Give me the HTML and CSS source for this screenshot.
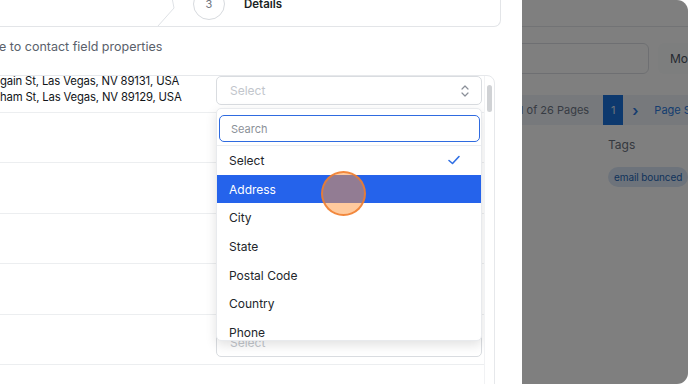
FILE: index.html
```html
<!DOCTYPE html>
<html lang="en">
<head>
    <meta charset="UTF-8">
    <meta name="viewport" content="width=device-width, initial-scale=1.0">
    <title>Import Contacts - Map Fields</title>
    <link rel="stylesheet" href="styles.css">
</head>
<body>
    <div class="screen">
        <!-- Drawer with the mapping step -->
        <div class="panel">
            <div class="stepper">
                <div class="step-prev"></div>
                <svg class="step-arrow" width="20" height="45" viewBox="0 0 20 45">
                    <polyline points="12,0 17,26 1,44" fill="none" stroke="#dfe2e6" stroke-width="1"/>
                </svg>
                <div class="step-num">3</div>
                <div class="step-label">Details</div>
            </div>

            <p class="intro">e to contact field properties</p>

            <div class="table-wrap">
                <div class="table-body">
                    <div class="row row-first">
                        <div class="cell-value">
                            <div>gain St, Las Vegas, NV 89131, USA</div>
                            <div>ham St, Las Vegas, NV 89129, USA</div>
                        </div>
                        <div class="cell-select">
                            <div class="select">
                                <span class="placeholder">Select</span>
                                <svg class="select-icon" width="10" height="14" viewBox="0 0 10 14">
                                    <polyline points="2,5 5,2 8,5" fill="none" stroke="#8a8f98" stroke-width="1.2" stroke-linecap="round" stroke-linejoin="round"/>
                                    <polyline points="2,9 5,12 8,9" fill="none" stroke="#8a8f98" stroke-width="1.2" stroke-linecap="round" stroke-linejoin="round"/>
                                </svg>
                            </div>

                            <div class="dropdown">
                                <div class="dropdown-search">
                                    <div class="search-input">Search</div>
                                </div>
                                <ul class="options">
                                    <li class="option">
                                        Select
                                        <svg width="14" height="12" viewBox="0 0 14 12">
                                            <polyline points="2,6.5 5.5,9.5 12,2.5" fill="none" stroke="#2f6fe4" stroke-width="1.6" stroke-linecap="round" stroke-linejoin="round"/>
                                        </svg>
                                    </li>
                                    <li class="option active">Address</li>
                                    <li class="option">City</li>
                                    <li class="option">State</li>
                                    <li class="option">Postal Code</li>
                                    <li class="option">Country</li>
                                    <li class="option">Phone</li>
                                    <li class="option">Email</li>
                                </ul>
                            </div>
                        </div>
                    </div>

                    <div class="row">
                        <div class="cell-value"></div>
                        <div class="cell-select"><div class="select"><span class="placeholder">Select</span></div></div>
                    </div>
                    <div class="row">
                        <div class="cell-value"></div>
                        <div class="cell-select"><div class="select"><span class="placeholder">Select</span></div></div>
                    </div>
                    <div class="row">
                        <div class="cell-value"></div>
                        <div class="cell-select"><div class="select"><span class="placeholder">Select</span></div></div>
                    </div>
                    <div class="row">
                        <div class="cell-value"></div>
                        <div class="cell-select">
                            <div class="select">
                                <span class="placeholder">Select</span>
                                <svg class="select-icon" width="10" height="8" viewBox="0 0 10 8">
                                    <polyline points="2,2.5 5,5.5 8,2.5" fill="none" stroke="#8a8f98" stroke-width="1.2" stroke-linecap="round" stroke-linejoin="round"/>
                                </svg>
                            </div>
                        </div>
                    </div>
                    <div class="row">
                        <div class="cell-value"></div>
                        <div class="cell-select"><div class="select"><span class="placeholder">Select</span></div></div>
                    </div>
                </div>
                <div class="scrollbar"><div class="thumb"></div></div>
            </div>

            <!-- click marker from the recording -->
            <div class="click-dot"></div>
        </div>

        <!-- Contacts page behind the drawer -->
        <div class="backdrop">
            <div class="page">
                <div class="page-head"></div>
                <div class="toolbar">
                    <div class="search-box"></div>
                    <div class="more-btn">More</div>
                </div>
                <div class="pager">
                    <span class="pager-text">1 of 26 Pages</span>
                    <span class="pager-num">1</span>
                    <span class="pager-next">&#8250;</span>
                    <span class="pager-size">Page Size</span>
                </div>
                <div class="col-head">Tags</div>
                <div class="tag-cell"><span class="tag">email bounced</span></div>
            </div>
            <div class="overlay"></div>
        </div>
    </div>
</body>
</html>
```

FILE: styles.css
```css
* {
    box-sizing: border-box;
}

html, body {
    margin: 0;
    padding: 0;
    background: #fff;
}

body {
    width: 688px;
    height: 384px;
    overflow: hidden;
    font-family: 'Inter', 'Noto Sans', sans-serif;
    color: #1f2328;
}

.screen {
    display: flex;
    width: 688px;
    height: 384px;
    border-radius: 0 11px 11px 0;
    overflow: hidden;
}

/* drawer */
.panel {
    position: relative;
    width: 522px;
    flex-shrink: 0;
    background: #fff;
    overflow: hidden;
}

.stepper {
    display: flex;
    align-items: center;
    height: 45px;
    margin: -18px 21px 0 -20px;
    border: 1px solid #e3e5e8;
    border-top: none;
    border-left: none;
    border-radius: 0 0 7px 0;
}

.step-prev {
    width: 177px;
    flex-shrink: 0;
}

.step-arrow {
    flex-shrink: 0;
    align-self: flex-start;
}

.step-num {
    width: 32px;
    height: 32px;
    margin-left: 16px;
    border: 1px solid #d7dade;
    border-radius: 50%;
    display: flex;
    align-items: center;
    justify-content: center;
    font-size: 11px;
    color: #70757d;
}

.step-label {
    margin-left: 19px;
    font-size: 11.5px;
    font-weight: 600;
    color: #1b1f24;
}

.intro {
    margin: 11px 0 0 -1px;
    font-size: 12.5px;
    line-height: 18px;
    color: #5a616b;
}

.table-wrap {
    display: flex;
    height: 330px;
    margin: 19px 27px 0 -20px;
    border: 1px solid #e6e8eb;
    border-radius: 0 8px 0 0;
}

.table-body {
    flex: 1;
    overflow: hidden;
}

.row {
    display: flex;
    justify-content: space-between;
    height: 50.4px;
    padding: 13px 2px 0 19px;
    border-bottom: 1px solid #eceef0;
}

.row-first {
    height: 37px;
    padding-top: 0;
}

.cell-value {
    margin-top: -3px;
    font-size: 11.3px;
    letter-spacing: -0.15px;
    line-height: 16px;
    color: #111418;
}

.cell-select {
    position: relative;
    width: 266px;
    flex-shrink: 0;
}

.select {
    display: flex;
    align-items: center;
    justify-content: space-between;
    height: 29px;
    padding: 0 11px 0 13px;
    border: 1px solid #d9dce0;
    border-radius: 5px;
    background: #fff;
}

.placeholder {
    font-size: 12px;
    color: #c2c6cc;
}

.scrollbar {
    width: 10px;
    border-left: 1px solid #f1f2f4;
    padding: 9px 2px 0 2px;
}

.thumb {
    height: 27px;
    border-radius: 3px;
    background: #d0d2d5;
}

/* open select menu */
.dropdown {
    position: absolute;
    top: 32px;
    left: 0;
    width: 266px;
    height: 233px;
    background: #fff;
    border: 1px solid #e8eaed;
    border-radius: 5px;
    box-shadow: 0 4px 12px rgba(0, 0, 0, 0.12);
    overflow: hidden;
    z-index: 2;
}

.dropdown-search {
    padding: 6px 1px 3px 2px;
    border-bottom: 1px solid #eceef0;
}

.search-input {
    height: 27px;
    padding-left: 11px;
    border: 1.5px solid #2f6be0;
    border-radius: 5px;
    display: flex;
    align-items: center;
    font-size: 11px;
    color: #8c9199;
}

.options {
    list-style: none;
    margin: 0;
    padding: 0;
}

.option {
    display: flex;
    align-items: center;
    justify-content: space-between;
    height: 28.7px;
    padding: 0 20px 0 12px;
    font-size: 12px;
    color: #22262b;
}

.option.active {
    background: #2563eb;
    color: #fff;
}

.click-dot {
    position: absolute;
    left: 321px;
    top: 171px;
    width: 45px;
    height: 45px;
    border-radius: 50%;
    background: rgba(255, 150, 60, 0.5);
    border: 2px solid rgba(240, 125, 45, 0.85);
    z-index: 3;
}

/* page behind */
.backdrop {
    position: relative;
    flex: 1;
    overflow: hidden;
    background: #fff;
}

.page {
    font-size: 12px;
    color: #374151;
}

.page-head {
    height: 27px;
    border-bottom: 1px solid #e4e6ea;
}

.toolbar {
    display: flex;
    gap: 9px;
    margin: 16px 0 0 -10px;
}

.search-box {
    width: 137px;
    height: 31px;
    flex-shrink: 0;
    border: 1px solid #dcdfe4;
    border-radius: 6px;
}

.more-btn {
    width: 60px;
    height: 31px;
    flex-shrink: 0;
    padding-left: 12px;
    display: flex;
    align-items: center;
    border-radius: 6px;
    background: #fbfcfd;
    color: #4b5563;
    font-size: 12px;
}

.pager {
    display: flex;
    align-items: center;
    height: 30px;
    margin-top: 21px;
    background: #eef3f9;
    white-space: nowrap;
    font-size: 11px;
}

.pager > span {
    flex-shrink: 0;
}

.pager-text {
    margin-left: -3px;
    color: #6f7887;
}

.pager-num {
    display: flex;
    align-items: center;
    justify-content: center;
    width: 20px;
    height: 30px;
    margin-left: 14px;
    background: #1a72dc;
    color: #dbe6f5;
}

.pager-next {
    margin-left: 9px;
    font-size: 15px;
    font-weight: 600;
    color: #2a7ae0;
}

.pager-size {
    margin-left: 16px;
    color: #2a7ae0;
}

.col-head {
    margin: 12px 0 0 86px;
    color: #6b7280;
}

.tag-cell {
    margin: 15px 0 0 86px;
}

.tag {
    display: inline-block;
    padding: 4px 6px;
    border-radius: 11px;
    background: #dbe7f6;
    color: #2366b8;
    font-size: 10px;
    letter-spacing: -0.1px;
    white-space: nowrap;
}

.overlay {
    position: absolute;
    inset: 0;
    background: rgba(0, 0, 0, 0.5);
}
```
